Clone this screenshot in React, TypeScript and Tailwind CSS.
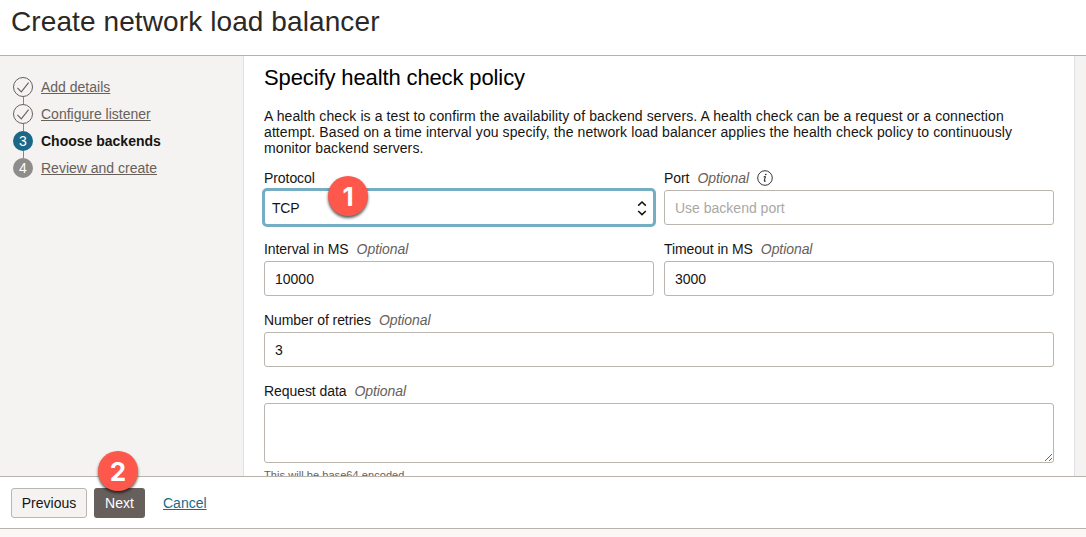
import React from "react";

function Marker({ n, className }: { n: number; className: string }) {
  return (
    <span
      className={`absolute z-20 flex size-10 items-center justify-center rounded-full bg-[#fd584b] pt-[2px] font-['Inter',sans-serif] text-[26px] leading-none font-bold text-white shadow-[0_2px_3px_rgba(0,0,0,0.65)] ${className}`}
    >
      {n}
    </span>
  );
}

function Optional() {
  return <em className="ml-2 text-[#67605b]">Optional</em>;
}

function Field({
  label,
  optional = true,
  info = false,
  children,
}: {
  label: string;
  optional?: boolean;
  info?: boolean;
  children: React.ReactNode;
}) {
  return (
    <div className="flex min-w-0 flex-1 flex-col">
      <div className="flex h-4 items-center text-[14px] leading-4 tracking-[-0.07px]">
        <span>{label}</span>
        {optional && <Optional />}
        {info && (
          <svg className="ml-2 size-4" viewBox="0 0 16 16" fill="none">
            <circle cx="8" cy="8" r="7.3" stroke="#3a3633" strokeWidth="1" />
            <path d="M6.7 6.9l1.7-.4-1.1 4.4q-.2.8.8.4l.7-.5" stroke="#161513" strokeWidth="1" />
            <circle cx="8.8" cy="4.5" r=".8" fill="#161513" />
          </svg>
        )}
      </div>
      {children}
    </div>
  );
}

const inputClass =
  "mt-1 block h-[35px] w-full rounded-[3px] border border-[#bab5af] bg-white px-2.5 text-[14px] text-[#161513] outline-none placeholder:text-[#aaa8a6] placeholder:opacity-100";

type Step = { label: string; state: "done" | "current" | "todo" };

const steps: Step[] = [
  { label: "Add details", state: "done" },
  { label: "Configure listener", state: "done" },
  { label: "Choose backends", state: "current" },
  { label: "Review and create", state: "todo" },
];

function StepIcon({ step, n }: { step: Step; n: number }) {
  if (step.state === "done") {
    return (
      <svg className="size-5 shrink-0" viewBox="0 0 20 20" fill="none" stroke="#67605b">
        <circle cx="10" cy="10" r="9.5" />
        <path d="M4.4 10.8l3.9 4L15.6 5.6" strokeWidth="1.1" />
      </svg>
    );
  }
  return (
    <span
      className={`flex size-5 shrink-0 items-center justify-center rounded-full text-[14px] leading-none text-white ${
        step.state === "current" ? "bg-[#1a6788]" : "bg-[#8f8d8b]"
      }`}
    >
      {n}
    </span>
  );
}

export default function App() {
  return (
    <div className="flex h-[537px] w-[1086px] flex-col overflow-hidden bg-[#f9f8f6] font-['Liberation_Sans',Arial,sans-serif] text-[#161513]">
      <header className="h-14 shrink-0 border-b border-[#b3b1ae] bg-white px-[11px] pt-[5px]">
        <h1 className="text-[28px] leading-[34px] tracking-[0.1px] whitespace-nowrap text-[#2b2826]">
          Create network load balancer
        </h1>
      </header>

      <div className="flex h-[420px] shrink-0 overflow-hidden bg-[#f4f3f1]">
        <nav className="w-[243px] shrink-0 pt-[21px] pl-[13px]">
          <ol className="flex flex-col">
            {steps.map((step, i) => (
              <li key={step.label} className="flex gap-2">
                <div className="flex flex-col items-center">
                  <StepIcon step={step} n={i + 1} />
                  {i < steps.length - 1 && <span className="h-[7px] w-px bg-[#8b8580]" />}
                </div>
                <a
                  className={
                    step.state === "current"
                      ? "text-[14px] leading-5 font-bold whitespace-nowrap"
                      : "text-[14px] leading-5 whitespace-nowrap text-[#67605b] underline underline-offset-1"
                  }
                >
                  {step.label}
                </a>
              </li>
            ))}
          </ol>
        </nav>

        <main className="flex w-[832px] shrink-0 flex-col border-x border-[#dfe0e4] bg-white px-5">
          <h2 className="mt-2 text-[22px] leading-7 tracking-[-0.12px] whitespace-nowrap text-black">
            Specify health check policy
          </h2>
          <p className="mt-4 text-[14px] leading-4 tracking-[0.095px] whitespace-nowrap">
            A health check is a test to confirm the availability of backend servers. A health check can be a request or a connection
            <br />
            attempt. Based on a time interval you specify, the network load balancer applies the health check policy to continuously
            <br />
            monitor backend servers.
          </p>

          <div className="mt-3.5 flex gap-2.5">
            <Field label="Protocol" optional={false}>
              <div className="relative -mx-0.5 mt-0.5 -mb-0.5 flex h-[39px] items-center justify-between rounded-[5px] border-[3px] border-[#75adc3] bg-white pr-1.5 pl-[7px] text-[14px]">
                <span className="pt-px tracking-[-0.2px]">TCP</span>
                <svg className="h-4 w-2.5" viewBox="0 0 10 16" fill="none" stroke="#161513" strokeWidth="1.6">
                  <path d="M1.2 5.6L5 2l3.8 3.6M1.2 11L5 14.6l3.8-3.6" />
                </svg>
                <Marker n={1} className="top-[-15px] left-[63px]" />
              </div>
            </Field>
            <Field label="Port" info>
              <input className={inputClass} placeholder="Use backend port" />
            </Field>
          </div>

          <div className="mt-4 flex gap-2.5">
            <Field label="Interval in MS">
              <input className={inputClass} defaultValue="10000" />
            </Field>
            <Field label="Timeout in MS">
              <input className={inputClass} defaultValue="3000" />
            </Field>
          </div>

          <div className="mt-4 flex">
            <Field label="Number of retries">
              <input className={inputClass} defaultValue="3" />
            </Field>
          </div>

          <div className="mt-4 flex">
            <Field label="Request data">
              <textarea className="mt-1 block h-[60px] w-full resize rounded-[3px] border border-[#bab5af] bg-white outline-none" />
            </Field>
          </div>
          <p className="mt-[5px] text-[11px] leading-[14px] tracking-[0.06px] text-[#67605b]">This will be base64 encoded.</p>
        </main>
      </div>

      <footer className="flex h-[53px] shrink-0 items-center border-y border-[#b8b3ad] bg-white pl-[11px] text-[14px] leading-4">
        <button className="h-[30px] w-[76px] rounded-[3px] border border-[#bab5af] bg-[#f4f3f1]">Previous</button>
        <button className="relative ml-[7px] h-[30px] w-[51px] rounded-[3px] bg-[#665f5b] text-white">
          Next
          <Marker n={2} className="top-[-37px] left-1" />
        </button>
        <a className="ml-[18px] text-[#176b8b] underline underline-offset-1">Cancel</a>
      </footer>
    </div>
  );
}
